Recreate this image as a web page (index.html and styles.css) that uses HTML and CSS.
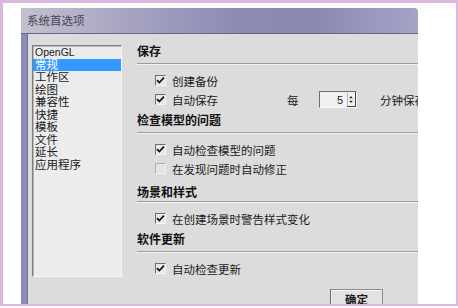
FILE: index.html
```html
<!DOCTYPE html>
<html>
<head>
<meta charset="utf-8">
<link rel="stylesheet" href="styles.css">
</head>
<body>
<div class="frame">
  <div class="dialog">
    <div class="titlebar"><span class="title">系统首选项</span></div>
    <div class="body">
      <ul class="list">
        <li>OpenGL</li>
        <li class="sel">常规</li>
        <li>工作区</li>
        <li>绘图</li>
        <li>兼容性</li>
        <li>快捷</li>
        <li>模板</li>
        <li>文件</li>
        <li>延长</li>
        <li>应用程序</li>
      </ul>
      <div class="panel">
        <section class="sec">
          <h3 class="head">保存</h3>
          <div class="rule"></div>
          <div class="items">
            <div class="item"><span class="cb"><svg viewBox="0 0 11 11" width="11" height="11"><path d="M2 5.2 L4.3 7.6 L9 2.6" fill="none" stroke="#111" stroke-width="1.7"/></svg></span><span class="lbl">创建备份</span></div>
            <div class="item"><span class="cb"><svg viewBox="0 0 11 11" width="11" height="11"><path d="M2 5.2 L4.3 7.6 L9 2.6" fill="none" stroke="#111" stroke-width="1.7"/></svg></span><span class="lbl wide">自动保存</span><span class="every">每</span><span class="spin"><span class="val">5</span><span class="arrows"><svg viewBox="0 0 9 15" width="9" height="15"><path d="M2.5 6 L4.5 3.5 L6.5 6 Z M2.5 9 L4.5 11.5 L6.5 9 Z" fill="#222"/><path d="M0.5 0 V15" stroke="#aaa" stroke-width="1"/></svg></span></span><span class="unit">分钟保存</span></div>
          </div>
        </section>
        <section class="sec sec-gap">
          <h3 class="head">检查模型的问题</h3>
          <div class="rule"></div>
          <div class="items">
            <div class="item"><span class="cb"><svg viewBox="0 0 11 11" width="11" height="11"><path d="M2 5.2 L4.3 7.6 L9 2.6" fill="none" stroke="#111" stroke-width="1.7"/></svg></span><span class="lbl">自动检查模型的问题</span></div>
            <div class="item"><span class="cb off"></span><span class="lbl">在发现问题时自动修正</span></div>
          </div>
        </section>
        <section class="sec">
          <h3 class="head">场景和样式</h3>
          <div class="rule tight"></div>
          <div class="items">
            <div class="item"><span class="cb"><svg viewBox="0 0 11 11" width="11" height="11"><path d="M2 5.2 L4.3 7.6 L9 2.6" fill="none" stroke="#111" stroke-width="1.7"/></svg></span><span class="lbl">在创建场景时警告样式变化</span></div>
          </div>
        </section>
        <section class="sec">
          <h3 class="head">软件更新</h3>
          <div class="rule"></div>
          <div class="items">
            <div class="item"><span class="cb"><svg viewBox="0 0 11 11" width="11" height="11"><path d="M2 5.2 L4.3 7.6 L9 2.6" fill="none" stroke="#111" stroke-width="1.7"/></svg></span><span class="lbl">自动检查更新</span></div>
          </div>
        </section>
        <div class="buttons"><span class="btn">确定</span></div>
      </div>
    </div>
  </div>
</div>
</body>
</html>
```
FILE: styles.css
```css
html, body {
  margin: 0;
  padding: 0;
  background: #fff;
}
body {
  font-family: "Liberation Sans", "Noto Sans CJK SC", sans-serif;
  color: #1a1a1a;
}
.frame {
  width: 458px;
  height: 306px;
  box-sizing: border-box;
  border-style: solid;
  border-color: #dcb8de;
  border-width: 3px 2px 2px 3px;
  padding: 5px 0 0 18px;
  overflow: hidden;
  background: #fff;
}
.dialog {
  width: 397px;
  height: 320px;
  display: flex;
  flex-direction: column;
  overflow: hidden;
}
.titlebar {
  height: 25px;
  flex: none;
  border-bottom: 1px solid #66668a;
  border-top-right-radius: 4px;
  background: linear-gradient(90deg, #c3c0d0 0%, #a9a6c3 25%, #8c8ab3 55%, #8a89b2 75%, #a5a4c6 100%);
  display: flex;
  align-items: center;
  padding-left: 6px;
}
.title {
  font-size: 11.5px;
  line-height: 14px;
  color: #44444f;
}
.body {
  flex: 1;
  display: flex;
  align-items: flex-start;
  background: #dcdcdc;
  border-left: 6px solid #8c8cb5;
  box-shadow: inset 1px 0 0 #6f6f98;
  padding: 11px 0 0 5px;
  overflow: hidden;
}
.list {
  list-style: none;
  margin: 0;
  padding: 0;
  width: 88px;
  height: 230px;
  flex: none;
  background: #ececec;
  border-style: solid;
  border-width: 1px;
  border-color: #7d7d7d #f6f6f6 #f6f6f6 #7d7d7d;
  box-shadow: inset 1px 1px 0 #b8b8b8;
  font-size: 11.5px;
  line-height: 12.5px;
}
.list li {
  padding-left: 2px;
  height: 12.5px;
  white-space: nowrap;
}
.list li:first-child {
  font-size: 10.5px;
}
.list .sel {
  background: #3399ff;
  color: #fff;
}
.panel {
  flex: none;
  width: 330px;
  margin-left: 15px;
}
.sec {
  margin-bottom: 5px;
}
.sec-gap {
  margin-bottom: 8px;
}
.head {
  margin: 0;
  font-size: 12px;
  font-weight: bold;
  line-height: 14px;
  color: #111;
}
.rule {
  margin-top: 4px;
  height: 1px;
  background: #9c9c9c;
  border-bottom: 1px solid #f2f2f2;
}
.rule.tight {
  margin-top: 1px;
}
.items {
  padding-top: 6px;
  padding-left: 18px;
}
.item {
  height: 19px;
  display: flex;
  align-items: center;
  font-size: 11.5px;
  white-space: nowrap;
}
.cb {
  width: 9px;
  height: 9px;
  flex: none;
  border-style: solid;
  border-width: 1px;
  border-color: #6e6e6e #f4f4f4 #f4f4f4 #6e6e6e;
  background: #e8e8e8;
  margin-right: 6px;
  position: relative;
}
.cb svg {
  position: absolute;
  left: -1px;
  top: -1px;
}
.cb.off {
  border-color: #b0b0b0 #f4f4f4 #f4f4f4 #b0b0b0;
  background: #e4e4e4;
}
.lbl.wide {
  width: 115px;
}
.every {
  width: 12px;
}
.spin {
  margin-left: 20px;
  width: 36px;
  height: 15px;
  border-style: solid;
  border-width: 1px;
  border-color: #6e6e6e #f8f8f8 #f8f8f8 #6e6e6e;
  background: #f1f1f1;
  display: flex;
  align-items: center;
  justify-content: flex-end;
  font-size: 11px;
}
.val {
  margin-right: 4px;
}
.arrows {
  width: 9px;
  height: 15px;
  display: flex;
  border-bottom: 1px solid #444;
  border-right: 1px solid #444;
  box-sizing: border-box;
}
.unit {
  margin-left: 23px;
}
.buttons {
  padding-top: 6px;
  padding-left: 193px;
}
.btn {
  display: block;
  width: 51px;
  height: 24px;
  border-style: solid;
  border-width: 1px;
  border-color: #8c8c8c #8c8c8c #8c8c8c #6a6a6a;
  background: #e2e2e2;
  box-shadow: inset 1px 1px 0 #f6f6f6;
  text-align: center;
  font-size: 11.5px;
  font-weight: bold;
  line-height: 18px;
  padding-top: 1px;
  color: #1a1a1a;
}
```
